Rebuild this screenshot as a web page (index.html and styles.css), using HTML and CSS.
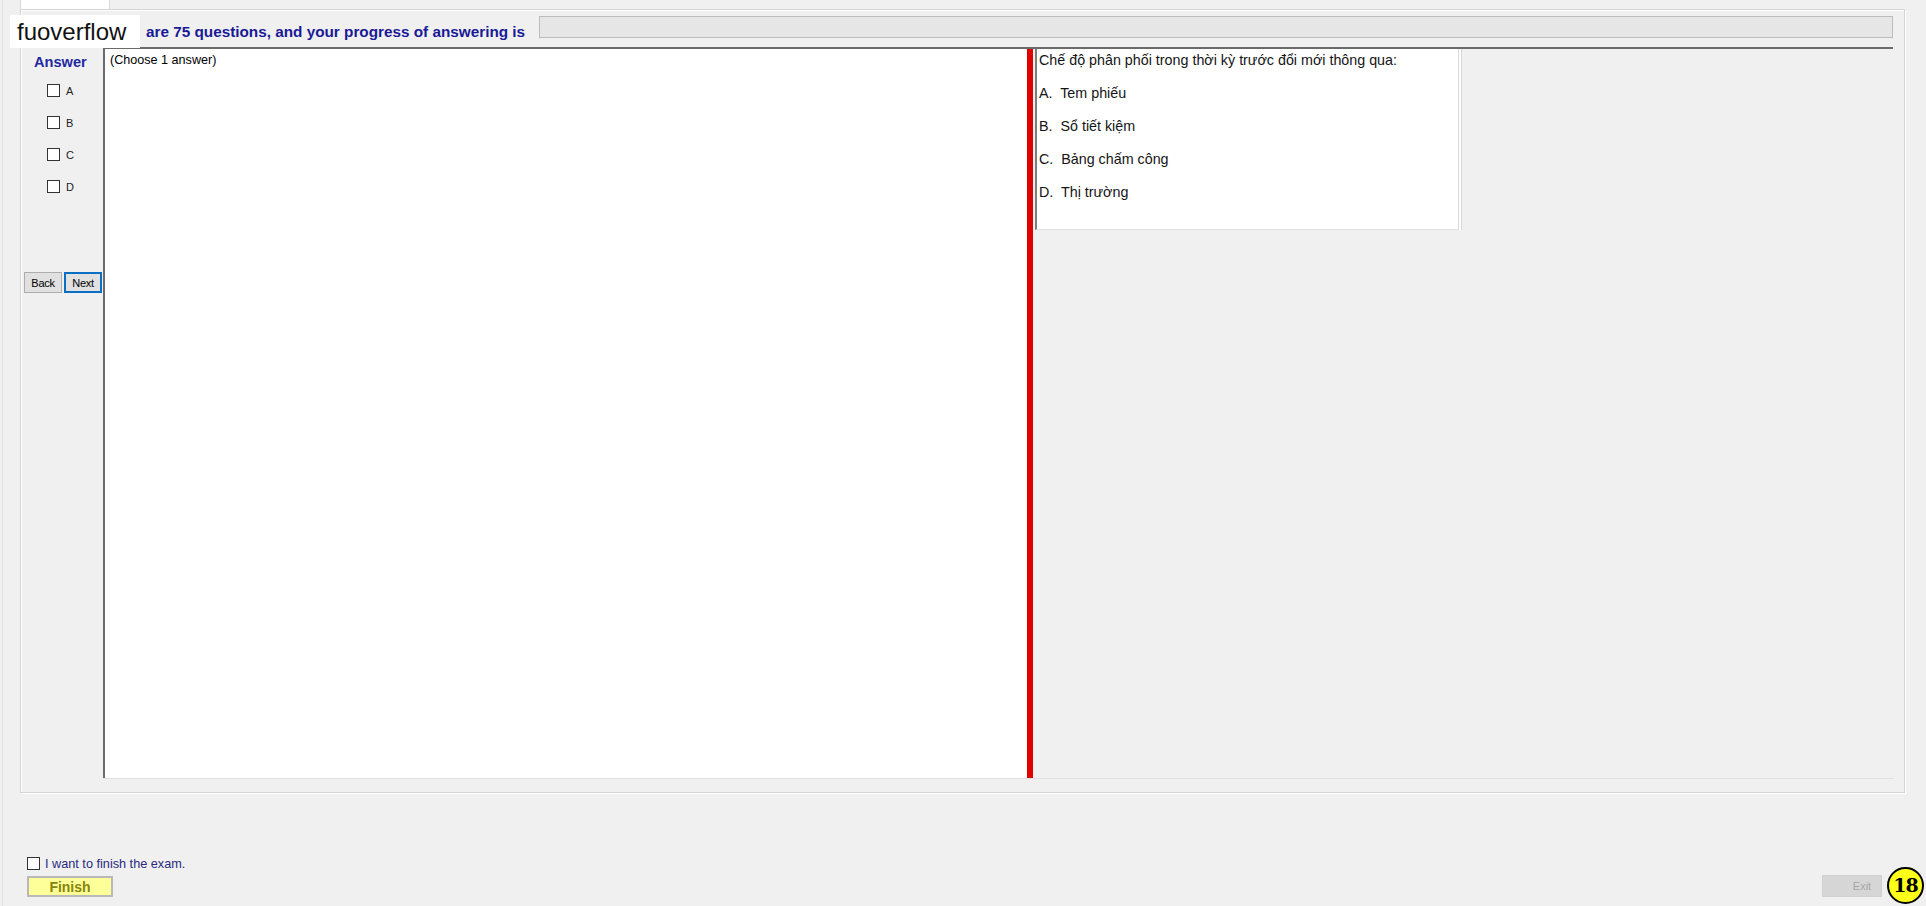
FILE: index.html
```html
<!DOCTYPE html>
<html lang="vi">
<head>
    <meta charset="UTF-8">
    <meta name="viewport" content="width=device-width, initial-scale=1.0">
    <title>Exam</title>
    <link rel="stylesheet" href="styles.css">
</head>
<body>
    <div class="window">
        <div class="tabs"><div class="tab"></div></div>

        <div class="panel">
            <div class="head">
                <span class="head-text">are 75 questions, and your progress of answering is</span>
                <div class="progress"></div>
            </div>

            <div class="body">
                <div class="answers">
                    <div class="answers-title">Answer</div>
                    <label class="opt"><span class="box"></span>A</label>
                    <label class="opt"><span class="box"></span>B</label>
                    <label class="opt"><span class="box"></span>C</label>
                    <label class="opt"><span class="box"></span>D</label>
                    <div class="nav">
                        <button class="btn">Back</button>
                        <button class="btn btn-focus">Next</button>
                    </div>
                </div>

                <div class="work">
                    <div class="pane">(Choose 1 answer)</div>
                    <div class="splitter"></div>
                    <div class="side">
                        <div class="question">
                            <p>Chế độ phân phối trong thời kỳ trước đổi mới thông qua:</p>
                            <p>A.  Tem phiếu</p>
                            <p>B.  Sổ tiết kiệm</p>
                            <p>C.  Bảng chấm công</p>
                            <p>D.  Thị trường</p>
                        </div>
                    </div>
                </div>
            </div>
        </div>

        <div class="footer">
            <div class="finish-area">
                <label class="confirm"><span class="box"></span>I want to finish the exam.</label>
                <button class="finish">Finish</button>
            </div>
            <button class="exit" disabled>Exit</button>
        </div>
    </div>

    <div class="brand">fuoverflow</div>
    <div class="badge">18</div>
</body>
</html>
```

FILE: styles.css
```css
body {
    margin: 0;
    width: 1926px;
    height: 906px;
    background: #f0f0f0;
    font-family: "Liberation Sans", Arial, sans-serif;
    color: #000;
    position: relative;
    overflow: hidden;
}
.window {
    height: 906px;
    padding: 0 21px 0 20px;
    border-left: 1px solid #e2e2e2;
    margin-left: 2px;
    box-sizing: border-box;
}
.window .tabs,
.window .panel,
.window .footer {
    margin-left: -3px;
}
.tabs {
    height: 9px;
}
.tab {
    width: 90px;
    height: 9px;
    background: #fff;
    border-left: 1px solid #d9d9d9;
    border-right: 1px solid #d9d9d9;
    box-sizing: border-box;
}

/* tab page */
.panel {
    height: 784px;
    border: 1px solid #d4d4d4;
    box-shadow: 1px 1px 0 #fff, inset 1px 1px 0 #fff;
    box-sizing: border-box;
    display: flex;
    flex-direction: column;
}
.head {
    height: 37px;
    display: flex;
    align-items: flex-start;
    flex: none;
}
.head-text {
    margin: 13px 0 0 125px;
    font-size: 15.3px;
    line-height: 18px;
    font-weight: bold;
    color: #1a1a96;
    white-space: nowrap;
}
.progress {
    flex: 1;
    height: 22px;
    margin: 6px 11px 0 14px;
    background: #e6e6e6;
    border: 1px solid #bcbcbc;
    box-sizing: border-box;
}

.body {
    flex: 1;
    display: flex;
    padding-bottom: 13px;
}
.answers {
    width: 82px;
    flex: none;
    padding-top: 7px;
    box-sizing: border-box;
}
.answers-title {
    font-size: 14.6px;
    line-height: 16px;
    font-weight: bold;
    color: #1f28a0;
    padding-left: 13px;
    margin-bottom: 14px;
}
.opt {
    display: flex;
    align-items: center;
    height: 13px;
    margin: 0 0 19px 26px;
    font-size: 11px;
    color: #222;
}
.box {
    display: inline-block;
    width: 11px;
    height: 11px;
    background: #fff;
    border: 1px solid #333;
    margin-right: 6px;
}
.nav {
    display: flex;
    gap: 2px;
    margin: 79px 0 0 3px;
}
.btn {
    height: 21px;
    padding: 0;
    width: 38px;
    font-family: "Liberation Sans", Arial, sans-serif;
    font-size: 11px;
    letter-spacing: -0.3px;
    background: #e1e1e1;
    border: 1px solid #adadad;
    color: #000;
}
.btn-focus {
    width: 38px;
    border: 2px solid #0a6fc2;
}

.work {
    flex: 1;
    display: flex;
    margin-right: 11px;
    border-top: 2px solid #6b6b6b;
    border-bottom: 1px solid #e0e0e0;
}
.pane {
    width: 924px;
    background: #fff;
    border-left: 2px solid #6b6b6b;
    padding: 4px 0 0 5px;
    font-size: 12.6px;
    line-height: 14px;
    box-sizing: border-box;
}
.splitter {
    width: 6px;
    background: #e00000;
}
.side {
    flex: 1;
    padding-left: 2px;
}
.question {
    width: 424px;
    height: 181px;
    background: #fff;
    border-left: 2px solid #7d7d7d;
    border-right: 1px solid #d8d8d8;
    border-bottom: 1px solid #e2e2e2;
    box-shadow: 2px 0 0 #fff, 3px 0 0 #d8d8d8;
    padding: 3px 0 0 2px;
    box-sizing: border-box;
}
.question p {
    margin: 0 0 17px;
    font-size: 14.3px;
    line-height: 16px;
    white-space: pre;
    color: #151515;
}

/* bottom bar */
.footer {
    display: flex;
    align-items: flex-end;
    margin-top: 64px;
    padding-left: 7px;
}
.finish-area {
    display: flex;
    flex-direction: column;
}
.confirm {
    display: flex;
    align-items: center;
    height: 13px;
    font-size: 12.7px;
    color: #2a2a80;
}
.confirm .box {
    margin-right: 5px;
}
.finish {
    margin-top: 6px;
    width: 86px;
    height: 21px;
    padding: 0;
    background: #ffff99;
    border: 2px solid #b8b8b8;
    font-family: "Liberation Sans", Arial, sans-serif;
    font-size: 14px;
    font-weight: bold;
    color: #85850a;
}
.exit {
    margin-left: auto;
    margin-right: 23px;
    width: 60px;
    height: 22px;
    padding: 0 0 0 20px;
    background: #d6d6d6;
    border: 1px solid #d0d0d0;
    font-family: "Liberation Sans", Arial, sans-serif;
    font-size: 11px;
    color: #a6a6a6;
}

.brand {
    position: absolute;
    left: 10px;
    top: 15px;
    width: 130px;
    height: 33px;
    padding-left: 7px;
    box-sizing: border-box;
    background: #fff;
    font-size: 24px;
    line-height: 33px;
    color: #111;
}
.badge {
    position: absolute;
    left: 1887px;
    top: 867px;
    width: 37px;
    height: 37px;
    border: 2px solid #000;
    border-radius: 50%;
    box-sizing: border-box;
    background: #ffff1a;
    font-family: "DejaVu Serif", serif;
    font-weight: bold;
    font-size: 19px;
    line-height: 33px;
    text-align: center;
    letter-spacing: -1px;
}
```
